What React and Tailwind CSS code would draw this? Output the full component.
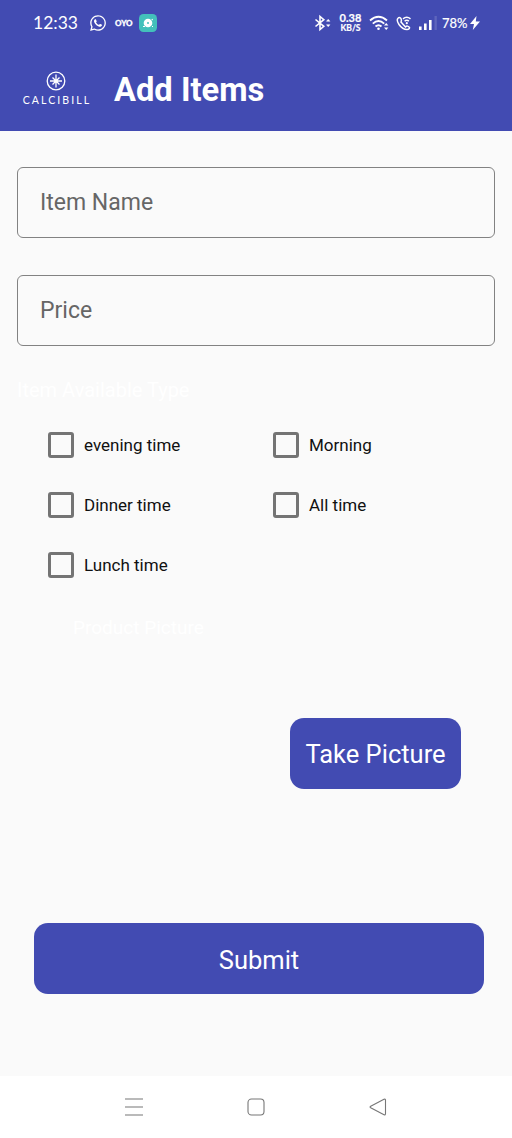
import React from 'react';
import { FaWhatsapp } from 'react-icons/fa';

const mealTimes = ['evening time', 'Morning', 'Dinner time', 'All time', 'Lunch time'];

const StatusBar = () => (
  <div className="flex h-[46px] items-center pl-[33px] text-white">
    <span className="w-[57px] font-['Lato',sans-serif] text-[17.5px] leading-none">12:33</span>
    <FaWhatsapp size={18} className="w-[18px] shrink-0 -ml-[1px]" />
    <span className="ml-[8px] w-[24px] font-['Lato',sans-serif] text-[8px] leading-none font-black [-webkit-text-stroke:0.3px_white]">OYO</span>
    <svg width="18" height="18" viewBox="0 0 18 18" className="shrink-0">
      <rect width="18" height="18" rx="4.5" fill="#43c0bb" />
      <circle cx="9" cy="9" r="4.3" fill="white" />
      <path d="M4 12.5h2M12.8 5.2l.8.8M13 12.5h1" stroke="white" strokeWidth="1.2" />
      <circle cx="9" cy="9" r="1" fill="#43c0bb" />
    </svg>

    {/* Bluetooth */}
    <svg width="18" height="18" viewBox="0 0 18 18" fill="none" stroke="white" strokeWidth="1.6" className="ml-[157px] shrink-0">
      <path d="M1.5 5.5L9.8 12.3 6 15.5V2.5L9.8 5.7 1.5 12.5" />
      <path d="M12.5 7.3l1.7-2 1.7 2zM12.5 10.7l1.7 2 1.7-2z" fill="white" strokeWidth="0.5" />
    </svg>
    <div className="ml-[6px] flex w-[25px] flex-col items-center font-['Lato',sans-serif] font-bold">
      <span className="text-[11px] leading-[10px] [-webkit-text-stroke:0.2px_white]">0.38</span>
      <span className="text-[8.5px] leading-[10px] [-webkit-text-stroke:0.2px_white]">KB/S</span>
    </div>
    {/* Wi-Fi */}
    <svg width="21" height="18" viewBox="0 0 21 18" fill="none" stroke="white" strokeWidth="1.9" className="ml-[6px] shrink-0">
      <path d="M1 6.5Q9.5-1 18 6.5M3.8 9.6Q9.5 4.5 15.2 9.6M6.5 12.5Q9.5 10 12.5 12.5" />
      <circle cx="9.5" cy="14.8" r="1.3" fill="white" stroke="none" />
      <path d="M15 11.5l2.2-2.5 2.2 2.5zM15 13.5l2.2 2.5 2.2-2.5z" fill="white" stroke="none" />
    </svg>
    {/* Wi-Fi calling */}
    <svg width="16" height="17" viewBox="0 0 16 17" fill="none" stroke="white" strokeWidth="1.5" className="ml-[6px] shrink-0">
      <path d="M2.2 3Q0 5 3 9.5Q6.5 14.5 11 14.5Q13.5 14.5 13.5 12.5Q11.5 10 9.5 12L5 7Q6 4.5 4.5 3Q3.2 1.8 2.2 3z" />
      <path d="M7 3.8Q10.7.8 14.5 3.8M8.6 6.2Q10.7 4.4 12.9 6.2" />
      <circle cx="10.8" cy="8.2" r="1.1" fill="white" stroke="none" />
    </svg>
    {/* Signal */}
    <svg width="18" height="16" viewBox="0 0 18 16" fill="white" className="ml-[7px] shrink-0">
      <rect x="0" y="11.5" width="2.6" height="3.5" />
      <rect x="5" y="8.5" width="2.6" height="6.5" />
      <rect x="10" y="5" width="2.6" height="10" />
      <rect x="15.5" y="1" width="2.3" height="14" opacity=".15" />
    </svg>
    <span className="ml-[5px] w-[28px] font-['Lato',sans-serif] text-[13px] leading-none whitespace-nowrap [-webkit-text-stroke:0.2px_white]">78%</span>
    <svg width="10" height="14" viewBox="0 0 10 14" fill="white" className="shrink-0">
      <path d="M6.5 0L0 8h4L2.8 14 10 5.5H5.8z" />
    </svg>
  </div>
);

const Logo = () => (
  <div className="flex w-[70px] flex-col items-center text-white">
    <svg width="20" height="20" viewBox="0 0 20 20" fill="none" stroke="white" strokeWidth="1.3" className="-ml-[2px]">
      <circle cx="10" cy="10" r="8.8" />
      <path d="M10 3.5v13M4 10h12M6.5 6.5l7 7M13.5 6.5l-7 7" />
      <circle cx="10" cy="10" r="1.5" fill="white" stroke="none" />
    </svg>
    <span className="mt-[3px] font-['Lato',sans-serif] text-[10.5px] leading-[12px] tracking-[2.1px]">CALCIBILL</span>
  </div>
);

const Field = ({ label }) => (
  <input
    aria-label={label}
    placeholder={label}
    className="h-[71px] w-full rounded-[6px] border border-[#828282] bg-transparent px-[22px] text-[23px] placeholder-[#666666] outline-none"
  />
);

const TimeOption = ({ label }) => (
  <label className="flex h-[60px] items-center gap-[10px] text-[17px] text-[#101010]">
    <input type="checkbox" className="size-[26px] shrink-0 appearance-none rounded-[3px] border-[3px] border-[#747474]" />
    <span className="pt-[2px]">{label}</span>
  </label>
);

const NavBar = () => (
  <nav className="flex h-[62px] items-center justify-center gap-[104px] bg-white">
    <svg width="18" height="18" viewBox="0 0 18 18" stroke="#777" strokeWidth="1.2">
      <path d="M0 1h18M0 9h18M0 17h18" />
    </svg>
    <svg width="18" height="18" viewBox="0 0 18 18" fill="none" stroke="#777" strokeWidth="1.1">
      <rect x="1" y="1" width="16" height="16" rx="3.5" />
    </svg>
    <svg width="18" height="18" viewBox="0 0 18 18" fill="none" stroke="#777" strokeWidth="1.1" strokeLinejoin="round">
      <path d="M1.7 8.2L15 1.2Q16.5.8 16.5 2.2V15.8Q16.5 17.2 15 16.8L1.7 9.8Q.5 9 1.7 8.2z" />
    </svg>
  </nav>
);

const App = () => (
  <div className="flex h-[1138px] w-[512px] flex-col overflow-hidden bg-[#fafafa] font-['Roboto',sans-serif]">
    <header className="h-[131px] shrink-0 bg-[#424bb2]">
      <StatusBar />
      <div className="flex h-[85px] items-center gap-[22px] pl-[22px]">
        <Logo />
        <h1 className="pt-[4px] text-[32.7px] font-bold text-white">Add Items</h1>
      </div>
    </header>

    <main className="flex flex-1 flex-col px-[17px] pt-[36px]">
      <div className="flex flex-col gap-[37px]">
        <Field label="Item Name" />
        <Field label="Price" />
      </div>

      <p className="mt-[32px] h-[24px] text-[20px] leading-[24px] text-white">Item Available Type</p>
      <div className="mt-[13px] grid grid-cols-[225px_1fr] pl-[31px]">
        {mealTimes.map((time) => (
          <TimeOption key={time} label={time} />
        ))}
      </div>
      <p className="mt-[21px] ml-[56px] h-[24px] text-[19px] leading-[24px] text-white">Product Picture</p>

      <button className="mt-[78px] mr-[34px] h-[71px] w-[171px] shrink-0 self-end rounded-[14px] bg-[#424bb2] pt-[2px] text-[25.5px] whitespace-nowrap text-white">
        Take Picture
      </button>
      <button className="mt-[134px] mr-[11px] ml-[17px] h-[71px] shrink-0 rounded-[14px] bg-[#424bb2] pt-[3px] text-[25.5px] text-white">
        Submit
      </button>
    </main>

    <NavBar />
  </div>
);

export default App;
